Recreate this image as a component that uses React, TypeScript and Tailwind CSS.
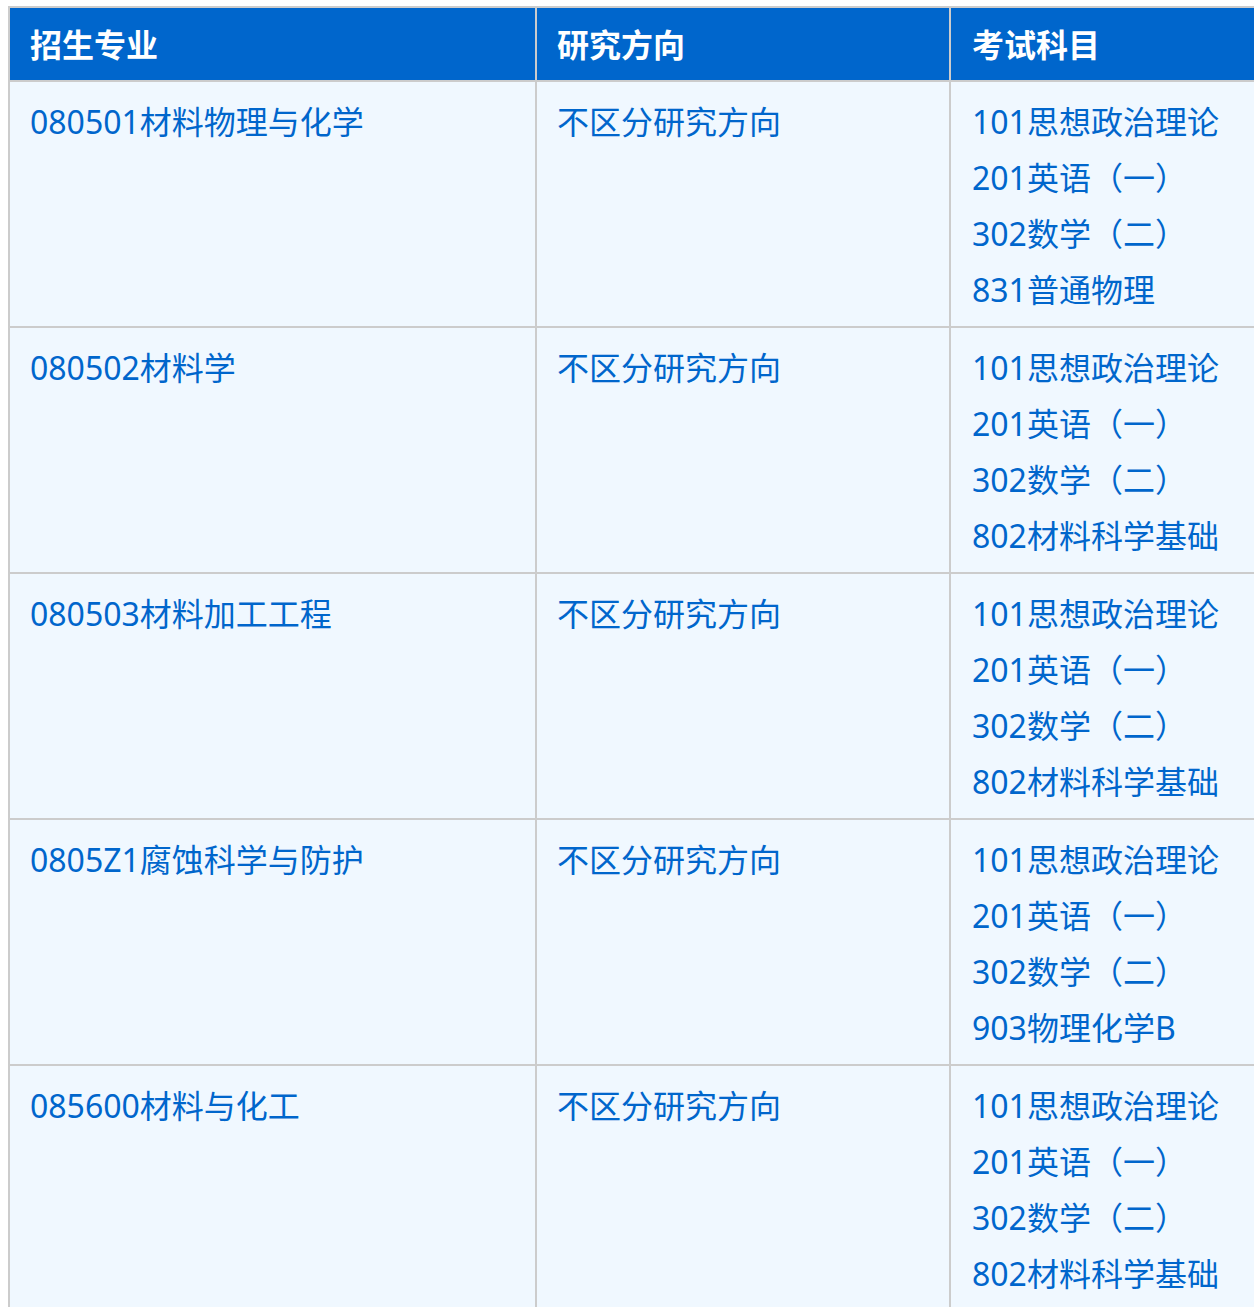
import React from "react";

const rows = [
  { major: "080501材料物理与化学", subjects: ["101思想政治理论", "201英语（一）", "302数学（二）", "831普通物理"] },
  { major: "080502材料学", subjects: ["101思想政治理论", "201英语（一）", "302数学（二）", "802材料科学基础"] },
  { major: "080503材料加工工程", subjects: ["101思想政治理论", "201英语（一）", "302数学（二）", "802材料科学基础"] },
  { major: "0805Z1腐蚀科学与防护", subjects: ["101思想政治理论", "201英语（一）", "302数学（二）", "903物理化学B"] },
  { major: "085600材料与化工", subjects: ["101思想政治理论", "201英语（一）", "302数学（二）", "802材料科学基础"] },
];

export default function App() {
  return (
    <div
      className="w-[1254px] h-[1307px] overflow-hidden bg-white pt-[6px] pl-[8px]"
      style={{ fontFamily: '"Noto Sans", "Noto Sans CJK SC", sans-serif' }}
    >
      <div className="w-[1300px] border-l-2 border-t-2 border-[#cccccc] text-[32px] leading-[56px]">
        <div className="flex bg-[#0066cc] text-white font-bold">
          <div className="w-[527px] shrink-0 border-r-2 border-b-2 border-[#cccccc] pl-[20px] pt-[9px] pb-[7px]">招生专业</div>
          <div className="w-[414px] shrink-0 border-r-2 border-b-2 border-[#cccccc] pl-[20px] pt-[9px] pb-[7px]">研究方向</div>
          <div className="w-[340px] shrink-0 border-r-2 border-b-2 border-[#cccccc] pl-[21px] pt-[9px] pb-[7px]">考试科目</div>
        </div>
        {rows.map((r) => (
          <div key={r.major} className="flex bg-[#f0f8ff] text-[#0066cc]">
            <div className="w-[527px] shrink-0 border-r-2 border-b-2 border-[#cccccc] pl-[20px] pt-[12px] pb-[8px]">{r.major}</div>
            <div className="w-[414px] shrink-0 border-r-2 border-b-2 border-[#cccccc] pl-[20px] pt-[12px] pb-[8px]">不区分研究方向</div>
            <div className="w-[340px] shrink-0 border-r-2 border-b-2 border-[#cccccc] pl-[21px] pt-[12px] pb-[8px]">
              {r.subjects.map((s) => (
                <div key={s}>{s}</div>
              ))}
            </div>
          </div>
        ))}
      </div>
    </div>
  );
}
